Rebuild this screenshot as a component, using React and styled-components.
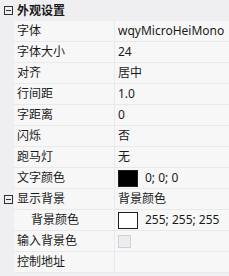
import React from "react";
import styled, { createGlobalStyle } from "styled-components";

const Global = createGlobalStyle`
  html, body { margin: 0; padding: 0; background: #f0f0f0; }
  body { font-family: "Noto Sans", "Noto Sans CJK SC", sans-serif; font-size: 12px; color: #1a1a1a; }
`;

const Grid = styled.div`
  width: 229px;
  height: 276px;
  overflow: hidden;
  background: #efeff2;
  display: flex;
  flex-direction: column;
`;

const HeaderRow = styled.div`
  height: 21px;
  display: flex;
  align-items: center;
  background: #efeff2;
`;

const Row = styled.div`
  height: 21px;
  display: flex;
`;

const Gutter = styled.div`
  width: 14px;
  flex: none;
  display: flex;
  align-items: center;
  justify-content: center;
  background: #efeff2;
`;

const Toggle = styled.span`
  box-sizing: border-box;
  width: 9px;
  height: 9px;
  border: 1px solid #303030;
  position: relative;
  margin-left: 2px;
  &::after {
    content: "";
    position: absolute;
    left: 1px;
    right: 1px;
    top: 3px;
    height: 1px;
    background: #303030;
  }
`;

const GroupTitle = styled.span`
  font-weight: bold;
  padding-left: 3px;
  line-height: 21px;
`;

const NameCell = styled.div`
  box-sizing: border-box;
  width: 101px;
  flex: none;
  display: flex;
  align-items: center;
  padding-left: ${(p) => (p.$indent ? 17 : 3)}px;
  background: #f7f7f7;
  border-bottom: 1px solid #e9e9e9;
  border-right: 1px solid #e9e9e9;
  white-space: nowrap;
  line-height: 20px;
`;

const ValueCell = styled.div`
  box-sizing: border-box;
  flex: 1;
  min-width: 0;
  display: flex;
  align-items: center;
  gap: 7px;
  padding-left: 3px;
  background: #f7f7f7;
  border-bottom: 1px solid #e9e9e9;
  white-space: nowrap;
  overflow: hidden;
  line-height: 20px;
`;

const Swatch = styled.span`
  box-sizing: border-box;
  width: 20px;
  height: 17px;
  flex: none;
  border: 1px solid #1e1e1e;
  background: ${(p) => p.$color};
`;

const Check = styled.span`
  box-sizing: border-box;
  width: 13px;
  height: 13px;
  border: 1px solid #cfcfd8;
  background: #ececf1;
`;

const rows = [
  { name: "字体", value: "wqyMicroHeiMono" },
  { name: "字体大小", value: "24" },
  { name: "对齐", value: "居中" },
  { name: "行间距", value: "1.0" },
  { name: "字距离", value: "0" },
  { name: "闪烁", value: "否" },
  { name: "跑马灯", value: "无" },
  { name: "文字颜色", value: "0; 0; 0", color: "#000000" },
];

export default function App() {
  return (
    <>
      <Global />
      <Grid>
        <HeaderRow>
          <Gutter>
            <Toggle />
          </Gutter>
          <GroupTitle>外观设置</GroupTitle>
        </HeaderRow>
        {rows.map((r) => (
          <Row key={r.name}>
            <Gutter />
            <NameCell>{r.name}</NameCell>
            <ValueCell>
              {r.color && <Swatch $color={r.color} />}
              {r.value}
            </ValueCell>
          </Row>
        ))}
        <Row>
          <Gutter>
            <Toggle />
          </Gutter>
          <NameCell>显示背景</NameCell>
          <ValueCell>背景颜色</ValueCell>
        </Row>
        <Row>
          <Gutter />
          <NameCell $indent>背景颜色</NameCell>
          <ValueCell>
            <Swatch $color="#ffffff" />
            255; 255; 255
          </ValueCell>
        </Row>
        <Row>
          <Gutter />
          <NameCell>输入背景色</NameCell>
          <ValueCell>
            <Check />
          </ValueCell>
        </Row>
        <Row>
          <Gutter />
          <NameCell>控制地址</NameCell>
          <ValueCell />
        </Row>
      </Grid>
    </>
  );
}
